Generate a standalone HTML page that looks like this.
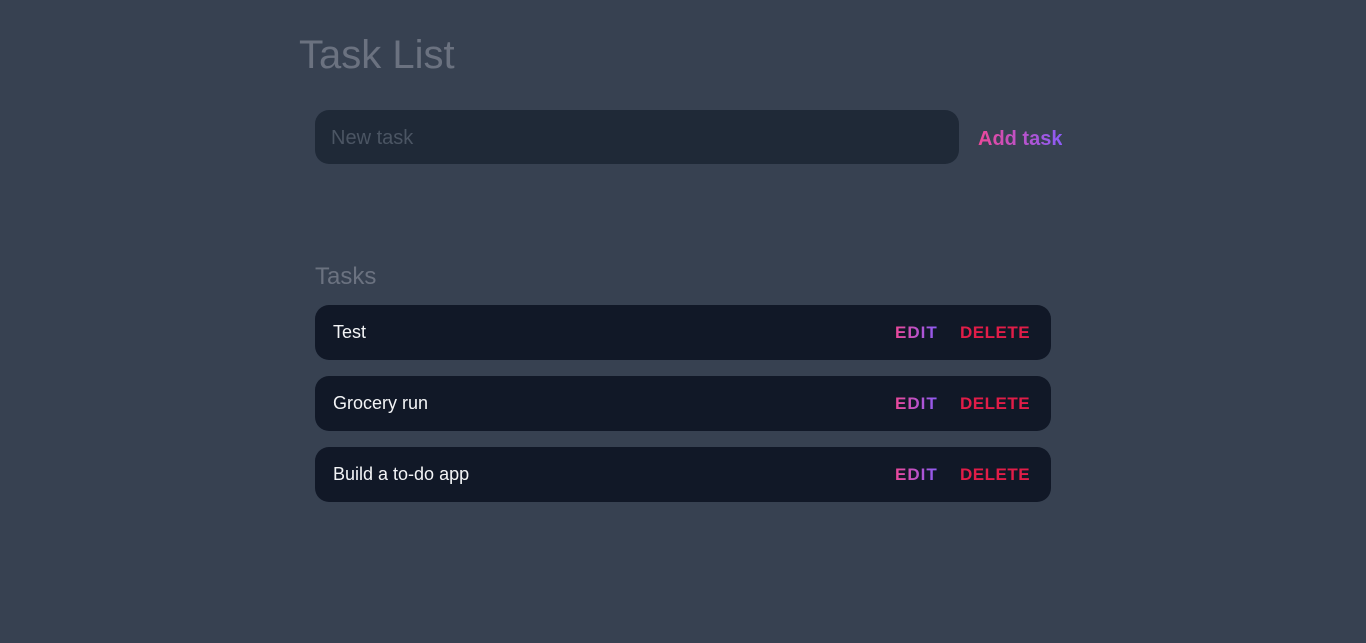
<!DOCTYPE html>
<html><head><style>
body{margin:0;background:#374151;font-family:"Liberation Sans",sans-serif;width:1366px;height:643px;overflow:hidden;position:relative}
.g{background:linear-gradient(90deg,#ec4899,#8b5cf6);-webkit-background-clip:text;background-clip:text;color:transparent}
h1{position:absolute;left:299px;top:33px;margin:0;font-weight:400;font-size:40px;color:#6b7280}
.inp{position:absolute;left:315px;top:110px;width:644px;height:54px;background:#1f2937;border-radius:14px;color:#4b5563;font-size:20px;line-height:56px;box-sizing:border-box;padding-left:16px}
.add{position:absolute;left:978px;top:128px;font-size:20px;font-weight:700}
.tl{position:absolute;left:315px;top:263px;font-size:24px;color:#6b7280}
.it{position:absolute;left:315px;width:736px;height:55px;background:#111827;border-radius:14px;color:#f3f4f6;font-size:18px;line-height:55px;box-sizing:border-box;padding-left:18px}
.e{position:absolute;left:580px;font-weight:700;font-size:17px;letter-spacing:1px}
.d{position:absolute;left:645px;font-weight:700;font-size:17px;letter-spacing:0.5px;color:#e11d48}
</style></head><body>
<h1>Task List</h1>
<div class="inp">New task</div>
<div class="add g">Add task</div>
<div class="tl">Tasks</div>
<div class="it" style="top:305px">Test<span class="e g">EDIT</span><span class="d">DELETE</span></div>
<div class="it" style="top:376px">Grocery run<span class="e g">EDIT</span><span class="d">DELETE</span></div>
<div class="it" style="top:447px">Build a to-do app<span class="e g">EDIT</span><span class="d">DELETE</span></div>
</body></html>
